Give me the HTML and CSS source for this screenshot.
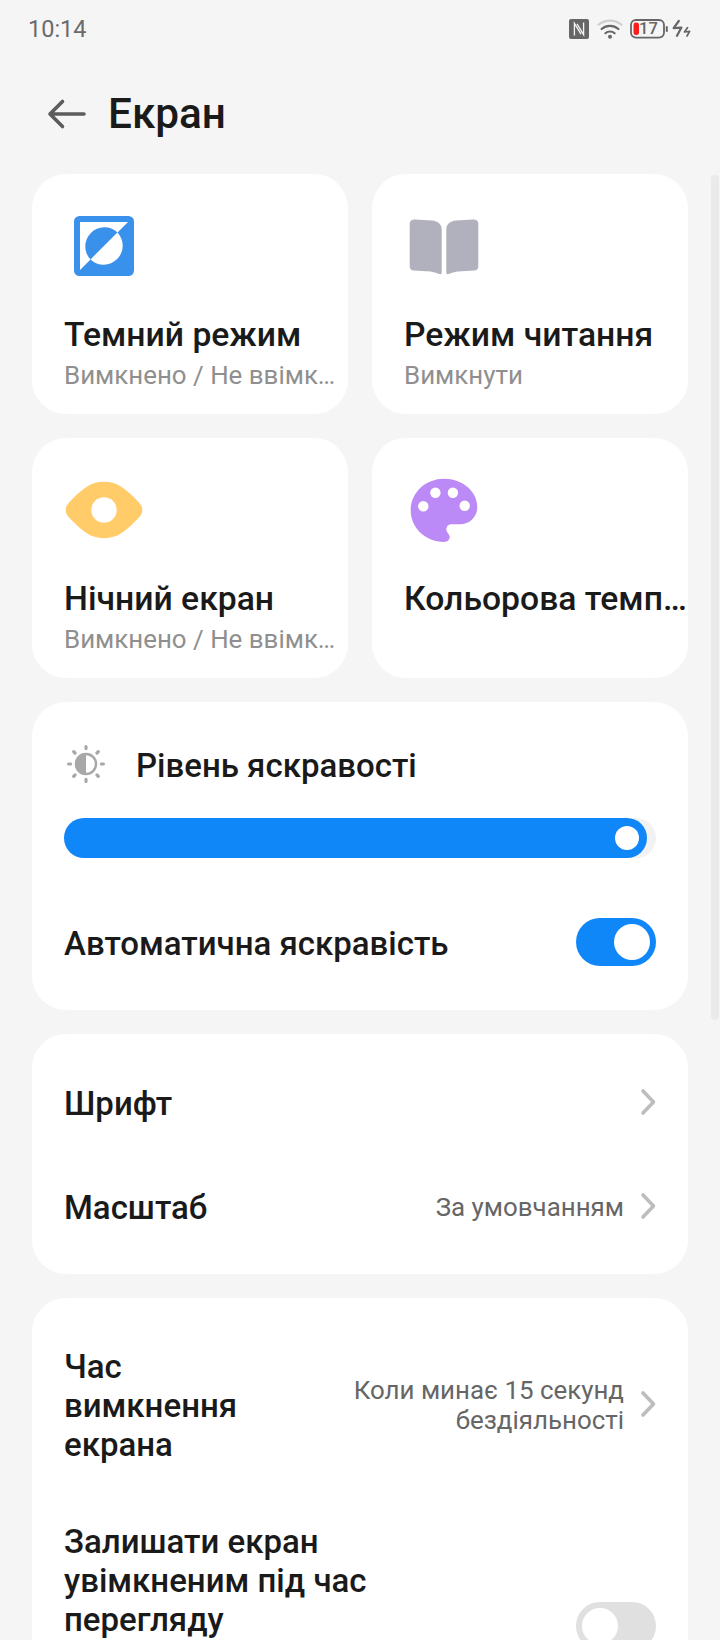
FILE: index.html
```html
<!DOCTYPE html>
<html lang="uk">
<head>
    <meta charset="UTF-8">
    <meta name="viewport" content="width=device-width, initial-scale=1.0">
    <title>Екран</title>
    <link rel="stylesheet" href="styles.css">
</head>
<body>

    <!-- Рядок стану -->
    <div class="status-bar">
        <span class="time">10:14</span>
        <div class="status-icons">
            <svg class="nfc" width="20" height="20" viewBox="0 0 20 20">
                <rect width="20" height="20" rx="2" fill="#666"/>
                <path d="M5.4 16.4V4.4L12 15.2M14.6 3.6V15.6L8 4.8" fill="none" stroke="#f5f5f5" stroke-width="1.3"/>
            </svg>
            <svg class="wifi" width="26" height="20" viewBox="0 0 26 20">
                <g fill="none" stroke-width="2.2" stroke-linecap="round">
                    <path d="M1.6 5.6C8 .2 18 .2 24.4 5.6" stroke="#cfcfcf"/>
                    <path d="M4.6 10C9.4 5.8 16.6 5.8 21.4 10" stroke="#666"/>
                    <path d="M8.4 14.2C11 11.9 15 11.9 17.6 14.2" stroke="#666"/>
                </g>
                <circle cx="13" cy="17.8" r="2" fill="#666"/>
            </svg>
            <svg class="battery" width="38" height="20" viewBox="0 0 38 20">
                <rect x="1" y="1" width="33" height="17.6" rx="5" fill="none" stroke="#666" stroke-width="1.8"/>
                <rect x="3.5" y="3.5" width="5.5" height="12.6" rx="2.4" fill="#fb1d1d"/>
                <rect x="35.8" y="7" width="2" height="6" rx="1" fill="#666"/>
                <text class="battery-level" x="9" y="15.4">17</text>
            </svg>
            <svg class="bolt" width="20" height="20" viewBox="0 0 20 20">
                <path d="M6.8 2L1.6 9.2L9.4 8.6L5 16.8" fill="none" stroke="#666" stroke-width="2.2" stroke-linejoin="round" stroke-linecap="round"/>
                <path d="M15.6 8.6L12.4 13L17.6 12.4L15 17" fill="none" stroke="#666" stroke-width="1.7" stroke-linejoin="round" stroke-linecap="round"/>
            </svg>
        </div>
    </div>

    <header class="header">
        <svg class="back" width="40" height="32" viewBox="0 0 40 32">
            <path d="M37 16H3M15.5 3.5L3 16L15.5 28.5" fill="none" stroke="#5c5c5c" stroke-width="3.6" stroke-linecap="round" stroke-linejoin="round"/>
        </svg>
        <h1>Екран</h1>
    </header>

    <main class="content">
        <div class="tiles">
            <div class="tile">
                <svg width="80" height="80" viewBox="0 0 80 80">
                    <rect x="10" y="10" width="60" height="60" rx="5.5" fill="#3a91ec"/>
                    <path d="M16 16H64L16 64Z" fill="#fff"/>
                    <path d="M26.5 53.5A19.1 19.1 0 0 1 53.5 26.5Z" fill="#3a91ec"/>
                    <path d="M53.5 26.5A19.1 19.1 0 0 1 26.5 53.5Z" fill="#fff"/>
                </svg>
                <h2>Темний режим</h2>
                <p>Вимкнено / Не ввімк…</p>
            </div>
            <div class="tile">
                <svg width="80" height="80" viewBox="0 0 80 80">
                    <g fill="#b1b0bd">
                        <path id="page" d="M5.7 18Q5.7 13.4 10.5 13.4C17 13.6 22 14 28 14.6C34 15.3 37.7 18.2 37.7 23.7V66.5Q37.7 68.6 35.5 68C31 66.5 29 65.5 22 65.2L9.7 64.6Q5.7 64.4 5.7 60Z"/>
                        <use href="#page" transform="matrix(-1 0 0 1 80 0)"/>
                    </g>
                </svg>
                <h2>Режим читання</h2>
                <p>Вимкнути</p>
            </div>
            <div class="tile">
                <svg width="80" height="80" viewBox="0 0 80 80">
                    <path d="M40 11.7C54 11.7 62 19 75.4 33Q81.4 40 75.4 47C62 61 54 68.2 40 68.2C26 68.2 18 61 4.6 47Q-1.4 40 4.6 33C18 19 26 11.7 40 11.7Z" fill="#ffcc69"/>
                    <circle cx="40" cy="40" r="12.7" fill="#fff"/>
                </svg>
                <h2>Нічний екран</h2>
                <p>Вимкнено / Не ввімк…</p>
            </div>
            <div class="tile">
                <svg width="80" height="80" viewBox="0 0 80 80">
                    <path d="M40 8.7C58.5 8.7 73.3 21.5 73.3 37C73.3 47 65.5 54.3 56 54.3H47.5C43 54.3 41 59 43.2 62.2C44.6 64.2 45.7 65 45.7 67C45.7 70 43.5 71.9 40 71.9C21.5 71.9 6.7 58 6.7 40.3C6.7 22.5 21.5 8.7 40 8.7Z" fill="#bb8af6"/>
                    <g fill="#fff">
                        <circle cx="19.3" cy="36.3" r="5.2"/>
                        <circle cx="31.4" cy="22.7" r="5.2"/>
                        <circle cx="48.9" cy="22.7" r="5.2"/>
                        <circle cx="60.7" cy="35.7" r="5.2"/>
                    </g>
                </svg>
                <h2>Кольорова темп…</h2>
            </div>
        </div>

        <section class="card brightness">
            <div class="brightness-title">
                <svg width="44" height="44" viewBox="0 0 44 44">
                    <circle cx="22" cy="22" r="10" fill="none" stroke="#a8a8a8" stroke-width="2.4"/>
                    <path d="M22 11A11 11 0 0 0 22 33Z" fill="#a8a8a8"/>
                    <g stroke="#a8a8a8" stroke-width="3.2" stroke-linecap="round">
                        <path d="M22 4.6V6.6M22 37.4V39.4M4.6 22H6.6M37.4 22H39.4"/>
                        <path d="M9.7 9.7L11 11M34.3 34.3L33 33M9.7 34.3L11 33M34.3 9.7L33 11"/>
                    </g>
                </svg>
                <span class="label">Рівень яскравості</span>
            </div>
            <div class="slider">
                <div class="slider-fill" style="width: 98.5%">
                    <div class="slider-knob"></div>
                </div>
            </div>
            <div class="row">
                <span class="label">Автоматична яскравість</span>
                <div class="toggle on"><div class="toggle-knob"></div></div>
            </div>
        </section>

        <section class="card">
            <div class="row">
                <span class="label">Шрифт</span>
                <svg class="chevron" width="16" height="28" viewBox="0 0 16 28">
                    <path d="M3 3L13.5 14L3 25" />
                </svg>
            </div>
            <div class="row">
                <span class="label">Масштаб</span>
                <span class="value">За умовчанням</span>
                <svg class="chevron" width="16" height="28" viewBox="0 0 16 28">
                    <path d="M3 3L13.5 14L3 25" />
                </svg>
            </div>
        </section>

        <section class="card timeout">
            <div class="row row-tall">
                <span class="label">Час<br>вимкнення<br>екрана</span>
                <span class="value">Коли минає 15 секунд<br>бездіяльності</span>
                <svg class="chevron" width="16" height="28" viewBox="0 0 16 28">
                    <path d="M3 3L13.5 14L3 25" />
                </svg>
            </div>
            <div class="row row-keep">
                <span class="label">Залишати екран<br>увімкненим під час<br>перегляду</span>
                <div class="toggle"><div class="toggle-knob"></div></div>
            </div>
        </section>
    </main>

    <div class="scrollbar"></div>

</body>
</html>
```
FILE: styles.css
```css
* {
    margin: 0;
    padding: 0;
    box-sizing: border-box;
}

body {
    font-family: Roboto, "Noto Sans", sans-serif;
    background: #f5f5f5;
    color: #1a1a1a;
    width: 720px;
    height: 1640px;
    overflow: hidden;
    position: relative;
}

svg {
    display: block;
    flex-shrink: 0;
}

/* Рядок стану */
.status-bar {
    display: flex;
    justify-content: space-between;
    align-items: center;
    height: 58px;
    padding: 0 28px;
}

.time {
    font-size: 23.5px;
    color: #6b6b6b;
}

.status-icons {
    display: flex;
    align-items: center;
}

.wifi {
    margin-left: 8px;
}

.battery {
    margin-left: 7px;
}

.battery-level {
    font-size: 16.5px;
    font-weight: 500;
    fill: #666;
}

.bolt {
    margin-left: 4px;
}

/* Заголовок */
.header {
    display: flex;
    align-items: center;
    height: 112px;
    padding: 0 48px 0 47px;
}

.header h1 {
    font-size: 42.3px;
    font-weight: 500;
    line-height: 50px;
    margin-left: 21px;
}

.content {
    display: flex;
    flex-direction: column;
    gap: 24px;
    padding: 4px 32px 0;
}

/* Плитки */
.tiles {
    display: grid;
    grid-template-columns: 316px 316px;
    grid-auto-rows: 240px;
    gap: 24px;
}

.tile {
    background: #fff;
    border-radius: 34px;
    padding: 32px 0 0 32px;
}

.tile h2 {
    font-size: 33.7px;
    font-weight: 500;
    line-height: 40px;
    margin-top: 29px;
    white-space: nowrap;
}

.tile p {
    font-size: 25.9px;
    line-height: 30px;
    margin-top: 5px;
    color: #8f8f8f;
    white-space: nowrap;
}

/* Картки */
.card {
    background: #fff;
    border-radius: 34px;
    padding: 16px 32px;
}

.row {
    display: flex;
    align-items: center;
    height: 104px;
}

.label {
    flex: 1;
    font-size: 33px;
    font-weight: 500;
    line-height: 39px;
    padding-top: 2px;
}

.value {
    font-size: 25.9px;
    line-height: 30px;
    color: #666;
    text-align: right;
    padding-top: 2px;
}

.chevron {
    margin-left: 16px;
}

.chevron path {
    fill: none;
    stroke: #bdbdbd;
    stroke-width: 3.6;
    stroke-linecap: round;
    stroke-linejoin: round;
}

.brightness {
    height: 308px;
    padding-top: 40px;
}

.brightness-title {
    display: flex;
    align-items: center;
    gap: 28px;
    height: 44px;
}

.slider {
    height: 40px;
    margin: 32px 0;
    background: #f2f2f2;
    border-radius: 20px;
}

.slider-fill {
    display: flex;
    justify-content: flex-end;
    align-items: center;
    height: 100%;
    padding-right: 8px;
    background: #1087f8;
    border-radius: 20px;
}

.slider-knob {
    width: 24px;
    height: 24px;
    background: #fff;
    border-radius: 50%;
}

.toggle {
    width: 80px;
    height: 48px;
    padding: 6px;
    display: flex;
    background: #e0e0e0;
    border-radius: 24px;
}

.toggle.on {
    justify-content: flex-end;
    background: #1087f8;
}

.toggle-knob {
    width: 36px;
    height: 36px;
    background: #fff;
    border-radius: 50%;
}

.timeout {
    height: 480px;
}

.row-tall {
    height: 180px;
}

.row-keep {
    height: 264px;
}

.row-keep .label {
    align-self: flex-start;
    padding-top: 28px;
}

/* Смуга прокрутки */
.scrollbar {
    position: absolute;
    top: 175px;
    left: 711px;
    width: 8px;
    height: 845px;
    background: #eaeaea;
    border-radius: 4px;
}
```
